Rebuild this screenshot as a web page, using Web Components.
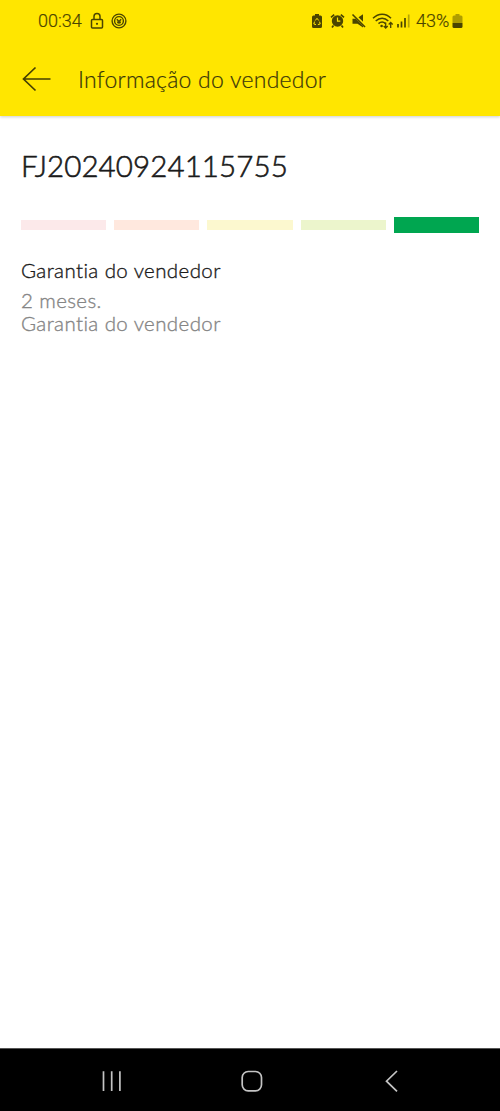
<!DOCTYPE html>
<html lang="pt-BR">
<head>
<meta charset="utf-8">
<meta name="viewport" content="width=device-width, initial-scale=1">
<title>Informação do vendedor</title>
<style>
    body {
        margin: 0;
        background: #fff;
        font-family: Lato, "Open Sans", sans-serif;
    }
</style>
</head>
<body>
<phone-screen>
    <status-bar slot="top" time="00:34" battery="43%"></status-bar>
    <app-header slot="top">Informação do vendedor</app-header>
    <seller-info>
        <span slot="name">FJ20240924115755</span>
        <reputation-meter slot="meter" level="5"></reputation-meter>
        <warranty-info slot="warranty">
            <span slot="title">Garantia do vendedor</span>
            <span slot="line1">2 meses.</span>
            <span slot="line2">Garantia do vendedor</span>
        </warranty-info>
    </seller-info>
    <nav-bar slot="bottom"></nav-bar>
</phone-screen>

<script>
class PhoneScreen extends HTMLElement {
    connectedCallback() {
        this.attachShadow({ mode: 'open' });
        this.shadowRoot.innerHTML = `
            <style>
                :host {
                    display: flex;
                    flex-direction: column;
                    width: 500px;
                    height: 1111px;
                    overflow: hidden;
                    background: #fff;
                }
                .top {
                    height: 116px;
                    background: #ffe600;
                    box-shadow: 0 1px 3px rgba(0, 0, 0, 0.2);
                }
                main { flex: 1; }
            </style>
            <div class="top"><slot name="top"></slot></div>
            <main><slot></slot></main>
            <slot name="bottom"></slot>
        `;
    }
}

class StatusBar extends HTMLElement {
    connectedCallback() {
        this.attachShadow({ mode: 'open' });
        this.shadowRoot.innerHTML = `
            <style>
                :host {
                    display: flex;
                    align-items: center;
                    justify-content: space-between;
                    box-sizing: border-box;
                    height: 41px;
                    padding: 0 37px 0 38px;
                    color: #4b4500;
                    font: 300 18px/20px Roboto, sans-serif;
                    -webkit-text-stroke: 0.2px;
                }
                div { display: flex; align-items: center; }
                svg { display: block; fill: none; stroke: currentColor; }
                .solid { fill: currentColor; stroke: none; }
                .time { width: 45px; }
                .lock { margin-left: 7px; }
                .target { margin-left: 7px; }
                .alarm { margin-left: 7px; }
                .mute { margin-left: 6px; }
                .wifi { margin-left: 5px; }
                .signal { margin-left: 3px; }
                .percent { width: 33px; margin-left: 6px; }
                .battery { margin-left: 3px; }
            </style>
            <div>
                <span class="time">${this.getAttribute('time')}</span>
                <svg class="lock" width="14" height="18" viewBox="0 0 14 18" stroke-width="1.5">
                    <rect x="1.5" y="7.5" width="11" height="8.5" rx="1"/>
                    <path d="M4 7.5V4.5a3 3 0 0 1 6 0v3"/>
                    <circle cx="7" cy="11.8" r="1.1" class="solid"/>
                </svg>
                <svg class="target" width="16" height="16" viewBox="0 0 16 16" stroke-width="1.4">
                    <circle cx="8" cy="8" r="6.9"/>
                    <circle cx="8" cy="8" r="4.4"/>
                    <path d="M5.8 6.3l2.200 2.200 2.200-2.200" stroke-width="1.4"/>
                    <path class="solid" d="M5.800 8.500h4.400a2.200 2.200 0 0 1-4.400 0z"/>
                </svg>
            </div>
            <div>
                <svg width="12" height="16" viewBox="0 0 12 16">
                    <path class="solid" d="M4 1h4v1.5h1.5a1.5 1.5 0 0 1 1.5 1.5v9.5a1.5 1.5 0 0 1-1.5 1.5h-7A1.5 1.5 0 0 1 1 13.500V4a1.500 1.500 0 0 1 1.500-1.500H4z"/>
                    <path d="M4.300 7.500L6 5.300l1.700 2.200M8.600 8.700l.6 2.300-2.300.6M5 11.600l-2.200-.6.7-2.400" stroke="#ffe600" stroke-width="1"/>
                </svg>
                <svg class="alarm" width="15" height="16" viewBox="0 0 15 16">
                    <circle class="solid" cx="7.500" cy="8" r="5.700"/>
                    <path d="M1 4.300L4.200 1.600M14 4.300L10.800 1.600M3.500 12.500L2 14.500M11.500 12.500L13 14.500" stroke-width="1.700"/>
                    <path d="M7.500 4.500V8.200H10.300" stroke="#ffe600" stroke-width="1.200"/>
                </svg>
                <svg class="mute" width="16" height="16" viewBox="0 0 16 16">
                    <path class="solid" d="M1.500 5.700h3.200l7.300 7.300v1.500L6.500 10.700h-5zM7.500 4.300L12 1.300v7.500z"/>
                    <path d="M1.500 1.500L14 14" stroke-width="1.600"/>
                </svg>
                <svg class="wifi" width="22" height="18" viewBox="0 0 22 18" stroke-width="1.500">
                    <path d="M1 6.200c5.400-5.400 13-5.400 18 0M3.700 9c3.900-3.700 9-3.700 12.600 0M6.500 11.600c2.200-2 5-2 7 0"/>
                    <circle class="solid" cx="9.600" cy="14" r="1.300"/>
                    <path d="M13.700 10.500V16M11.700 14l2 2 2-2M18.700 16V10.500M16.700 12.500l2-2 2 2" stroke-width="1.300"/>
                </svg>
                <svg class="signal" width="13" height="14" viewBox="0 0 13 14" stroke-width="1.700">
                    <path d="M1 10V13.500M4.500 7.500V13.500M8 4V13.500"/>
                    <path d="M11.700 .500V13.500" opacity=".4"/>
                </svg>
                <span class="percent">${this.getAttribute('battery')}</span>
                <svg class="battery" width="11" height="16" viewBox="0 0 11 16">
                    <path class="solid" opacity=".45" d="M3.500 1h4v1.500h1.500a1.500 1.500 0 0 1 1.500 1.500v6H.5V4A1.500 1.500 0 0 1 2 2.500h1.500z"/>
                    <path class="solid" d="M.5 10h10v3.500a1.500 1.500 0 0 1-1.500 1.500H2a1.500 1.500 0 0 1-1.500-1.500z"/>
                </svg>
            </div>
        `;
    }
}

class AppHeader extends HTMLElement {
    connectedCallback() {
        this.attachShadow({ mode: 'open' });
        this.shadowRoot.innerHTML = `
            <style>
                :host {
                    display: flex;
                    align-items: center;
                    gap: 27px;
                    height: 75px;
                    padding-left: 22px;
                    color: #39350a;
                    font-size: 23px;
                    font-weight: 300;
                    letter-spacing: 0.25px;
                    -webkit-text-stroke: 0.2px;
                }
                svg { display: block; fill: none; stroke: #453f02; stroke-width: 1.7; }
            </style>
            <svg width="29" height="26" viewBox="0 0 29 26">
                <path d="M28.500 13H1.500M13.500 1.500L1.500 13l12 11.500"/>
            </svg>
            <span><slot></slot></span>
        `;
    }
}

class SellerInfo extends HTMLElement {
    connectedCallback() {
        this.attachShadow({ mode: 'open' });
        this.shadowRoot.innerHTML = `
            <style>
                :host { display: block; padding: 30px 21px 0; }
                h1 {
                    margin: 0 0 31px;
                    color: #1a1a1a;
                    font-size: 29.5px;
                    font-weight: 300;
                    line-height: 39px;
                    padding-bottom: 1px;
                    letter-spacing: 0.1px;
                    -webkit-text-stroke: 0.6px;
                }
            </style>
            <h1><slot name="name"></slot></h1>
            <slot name="meter"></slot>
            <slot name="warranty"></slot>
        `;
    }
}

// Five-step thermometer, the seller's current level is drawn taller
class ReputationMeter extends HTMLElement {
    connectedCallback() {
        const level = Number(this.getAttribute('level'));
        const colors = ['#fce9ea', '#ffe8de', '#fcf8cf', '#ecf5cc', '#00a650'];
        const steps = colors.map((color, i) =>
            `<i class="${i + 1 === level ? 'active' : ''}" style="background:${color}"></i>`).join('');

        this.attachShadow({ mode: 'open' });
        this.shadowRoot.innerHTML = `
            <style>
                :host {
                    display: flex;
                    align-items: center;
                    gap: 8px;
                    height: 16px;
                }
                i { flex: 1; height: 10px; }
                .active { height: 16px; }
            </style>
            ${steps}
        `;
    }
}

class WarrantyInfo extends HTMLElement {
    connectedCallback() {
        this.attachShadow({ mode: 'open' });
        this.shadowRoot.innerHTML = `
            <style>
                :host {
                    display: block;
                    margin-top: 26px;
                    color: #858585;
                    font-size: 20.5px;
                    font-weight: 300;
                    line-height: 23px;
                    letter-spacing: 0.4px;
                    -webkit-text-stroke: 0.35px;
                }
                h2 {
                    margin: 0 0 7px;
                    color: #1a1a1a;
                    font: inherit;
                }
                p { margin: 0; }
            </style>
            <h2><slot name="title"></slot></h2>
            <p><slot name="line1"></slot></p>
            <p><slot name="line2"></slot></p>
        `;
    }
}

class NavBar extends HTMLElement {
    connectedCallback() {
        this.attachShadow({ mode: 'open' });
        this.shadowRoot.innerHTML = `
            <style>
                :host {
                    display: flex;
                    align-items: center;
                    justify-content: space-between;
                    box-sizing: border-box;
                    height: 63px;
                    padding: 2px 98px 0 101px;
                    border-top: 1px solid #555;
                    background: #000;
                }
                svg { display: block; fill: none; stroke: #c4c4c4; stroke-width: 1.7; }
            </style>
            <svg width="22" height="22" viewBox="0 0 22 22"><path d="M2.500 1.200V21M10.700 1.200V21M18.900 1.200V21"/></svg>
            <svg width="22" height="22" viewBox="0 0 22 22"><rect x="1.200" y="1.500" width="19.300" height="19.300" rx="6"/></svg>
            <svg width="22" height="22" viewBox="0 0 22 22"><path d="M17 1L6.500 11.200 17 21.400"/></svg>
        `;
    }
}

customElements.define('phone-screen', PhoneScreen);
customElements.define('status-bar', StatusBar);
customElements.define('app-header', AppHeader);
customElements.define('seller-info', SellerInfo);
customElements.define('reputation-meter', ReputationMeter);
customElements.define('warranty-info', WarrantyInfo);
customElements.define('nav-bar', NavBar);
</script>
</body>
</html>
